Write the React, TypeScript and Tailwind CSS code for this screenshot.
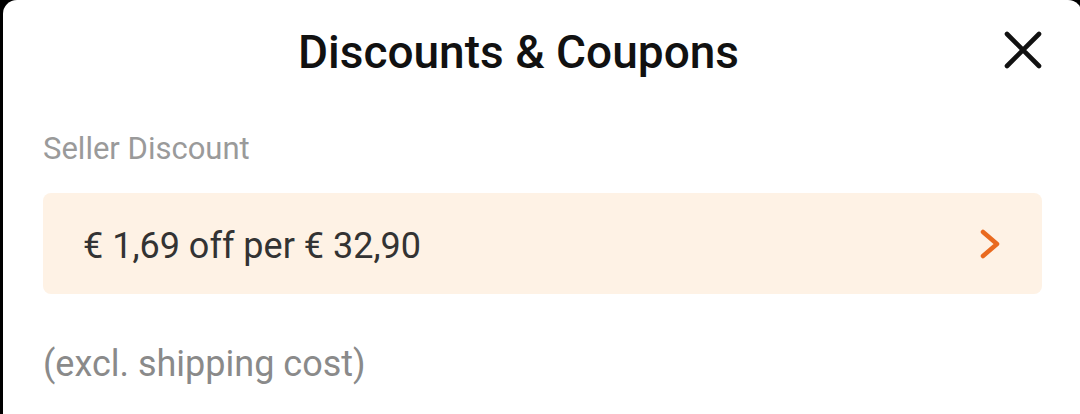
export default function App() {
  return (
    <div className="w-[1080px] h-[414px] overflow-hidden bg-black">
      <div className="ml-[3px] w-[1079px] h-[414px] bg-white rounded-t-[14px] font-['Roboto',sans-serif]">
        {/* Header */}
        <div className="relative h-[100px] flex items-center justify-center pr-[48px] pt-[4px]">
          <h1 className="text-[46px] leading-none font-medium text-[#111111]">Discounts &amp; Coupons</h1>
          <button className="absolute right-[40px] top-[31px] w-[38px] h-[38px] flex items-center justify-center">
            <svg width="38" height="38" viewBox="0 0 38 38" fill="none">
              <path d="M3 3L35 35M35 3L3 35" stroke="#111111" strokeWidth="4.6" strokeLinecap="round" />
            </svg>
          </button>
        </div>

        <div className="px-[40px]">
          <div className="mt-[31px] text-[31px] leading-[36px] text-[#9a9a9a]">Seller Discount</div>

          <div className="mt-[26px] h-[101px] rounded-[8px] bg-[#fef2e5] flex items-center justify-between pl-[40px] pr-[42px]">
            <span className="pt-[4px] text-[36px] text-[#333333]">€ 1,69 off per € 32,90</span>
            <svg width="20" height="30" viewBox="0 0 20 30" fill="none">
              <path d="M3 3L17 15L3 27" stroke="#e96a1f" strokeWidth="4.5" strokeLinecap="round" strokeLinejoin="round" />
            </svg>
          </div>

          <div className="mt-[50px] text-[36px] leading-[40px] text-[#8a8a8a]">(excl. shipping cost)</div>
        </div>
      </div>
    </div>
  );
}
